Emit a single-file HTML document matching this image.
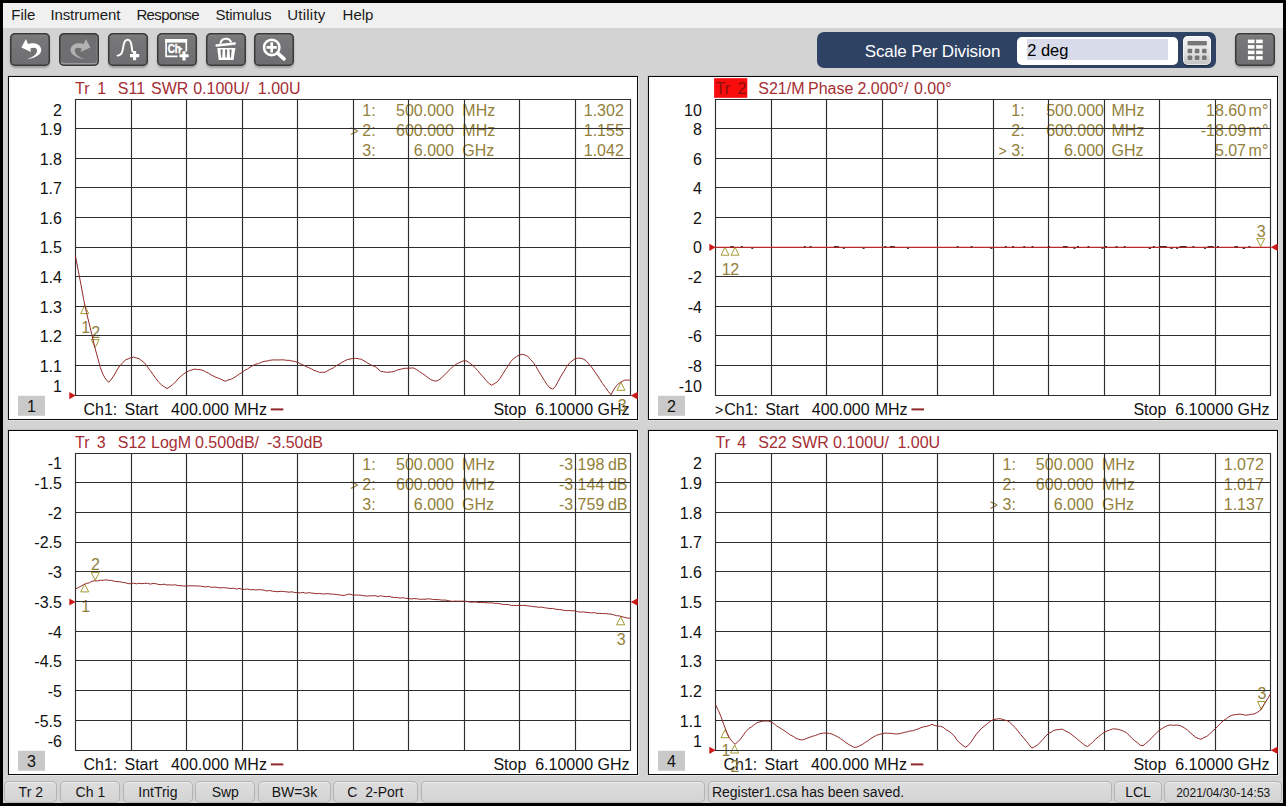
<!DOCTYPE html>
<html lang="en">
<head>
<meta charset="utf-8">
<title>Network Analyzer</title>
<style>
html,body{margin:0;padding:0;}
body{width:1286px;height:806px;background:#000;overflow:hidden;position:relative;
 font-family:"Liberation Sans", sans-serif;color:#111;}
#app{position:absolute;left:3px;top:3px;width:1280px;height:800px;background:#d3d3d3;overflow:hidden;}
#menubar{position:absolute;left:0;top:0;width:1280px;height:25px;background:#f0f0f0;}
#menubar span{position:absolute;top:2px;font-size:15px;line-height:20px;color:#1a1a1a;white-space:pre;}
.tb{position:absolute;top:30.1px;width:40px;height:32.7px;box-sizing:border-box;
 border-radius:5px;background:linear-gradient(#8a8a8b 0,#78787a 12%,#727274 60%,#6e6e70 100%);box-shadow:inset 0 0 0 1.5px #3a3a3a,0 2px 2px rgba(0,0,0,.25);}
.tb svg{position:absolute;left:0;top:0;}
.panel{position:absolute;box-sizing:border-box;background:#fff;border:1px solid #0a0a0a;box-shadow:1px 1px 0 #e6e6e6,-1px -1px 0 #c4c4c4;}
svg text{font-family:"Liberation Sans", sans-serif;}
#layer{position:absolute;left:-3px;top:-3px;}
.sb{position:absolute;top:777.8px;height:22px;box-sizing:border-box;border:1px solid #b4b4b4;border-radius:5px;
 background:linear-gradient(#dedede,#d3d3d3);box-shadow:inset 0 1px 0 #ececec;font-size:14px;line-height:20.6px;text-align:center;color:#151515;white-space:pre;}
.tb2{background:#6f6f71;box-shadow:inset 0 0 0 1.5px #3a3a3a,inset 0 -3px 0 #9c9c9c,inset -2.5px 0 0 #848484;}
#entry{position:absolute;left:814px;top:29.3px;width:399.3px;height:35.6px;border-radius:7px;background:#2e4264;}
#elabel{position:absolute;left:47.8px;top:9.9px;font-size:17px;line-height:20px;color:#fff;white-space:pre;letter-spacing:-0.14px;}
#efield{position:absolute;left:200px;top:5.2px;width:161px;height:27.2px;border-radius:5px;background:#fff;}
#esel{position:absolute;left:9.8px;top:1.8px;width:141.5px;height:21.2px;background:#d7dbea;}
#efield span{position:absolute;left:10.2px;top:2.3px;font-size:16.5px;line-height:20px;color:#000;white-space:pre;}
#calc{position:absolute;left:365.8px;top:3.9px;width:28.4px;height:28.8px;border-radius:5px;background:linear-gradient(#f4f4f6,#e2e2e4 55%,#c2c2c4);box-shadow:0 1px 1px rgba(0,0,0,.45),inset 0 0 0 1px rgba(255,255,255,.6);}
#calc svg{position:absolute;left:0;top:0;}
</style>
</head>
<body>
<div id="app">

<div id="menubar">
<span style="left:8.3px;letter-spacing:0.00px">File</span>
<span style="left:47.4px;letter-spacing:-0.10px">Instrument</span>
<span style="left:133.4px;letter-spacing:-0.62px">Response</span>
<span style="left:212.4px;letter-spacing:-0.20px">Stimulus</span>
<span style="left:284.2px;letter-spacing:0.25px">Utility</span>
<span style="left:339.6px;letter-spacing:0.00px">Help</span>
</div>
<div class="tb" style="left:7.3px"><svg width="40" height="33" viewBox="0 0 40 33"><path transform="translate(1 0)" d="M10.4 14.4L14.9 6.1L17.1 10.9C22.5 9.4 29.6 11 30.3 16.6C30.7 21.4 24.2 25.2 16 26.3C21 24.2 26.4 21.6 26 17.2C25.7 14.4 22.6 14.3 19.2 15.6L20 19z" fill="#fff"/></svg></div>
<div class="tb tb2" style="left:56.0px"><svg width="40" height="33" viewBox="0 0 40 33"><path transform="translate(1.5 0)" d="M29.9 14.4L25.4 6.1L23.2 10.9C17.8 9.4 10.7 11 10 16.6C9.6 21.4 16.1 25.2 24.3 26.3C19.3 24.2 13.9 21.6 14.3 17.2C14.6 14.4 17.7 14.3 21.1 15.6L20.3 19z" fill="#b2b2b2"/></svg></div>
<div class="tb" style="left:105.2px"><svg width="40" height="33" viewBox="0 0 40 33"><path d="M9.5 22.6c4.6 0 5.2-4.6 6-10.2 .7-3.6 1.9-5.6 4.2-5.6 2.4 0 3.4 2.6 3.9 6.2l.8 5.6" fill="none" stroke="#fff" stroke-width="1.9" stroke-linecap="round"/><path d="M26.6 18v9.2M22 22.6h9.2" stroke="#fff" stroke-width="3.1" fill="none"/></svg></div>
<div class="tb" style="left:153.9px"><svg width="40" height="33" viewBox="0 0 40 33"><path d="M29.3 18.6V6.9H9.1v16.4h11.4" fill="none" stroke="#fff" stroke-width="1.7"/><rect x="8.3" y="6.0" width="21.8" height="3.6" fill="#fff"/><text x="10.8" y="20.0" font-size="12.2" font-weight="bold" fill="#fff" textLength="13.0" lengthAdjust="spacingAndGlyphs" stroke="#fff" stroke-width=".5">Ch</text><path d="M22.6 14.0l3.4 1.9-3.4 1.9z" fill="#fff"/><path d="M27 18.2v9.2M22.4 22.8h9.2" stroke="#fff" stroke-width="3.1" fill="none"/></svg></div>
<div class="tb" style="left:202.5px"><svg width="40" height="33" viewBox="0 0 40 33"><path d="M11.3 14.9h18.1l-1.9 12h-14.8z" fill="#fff"/><path d="M14.5 16.6h2.2l-.5 8h-1.2zM19 16.6h2.2l-.4 8h-1.4zM23.5 16.6h2.2l-.7 8h-1.1z" fill="#717173"/><path d="M10.6 12.4L28.7 10.4" stroke="#fff" stroke-width="2.5" stroke-linecap="round"/><path d="M14.3 10.6c1.2-6 9.2-6.4 10.8-1.2" fill="none" stroke="#fff" stroke-width="1.9"/></svg></div>
<div class="tb" style="left:251.2px"><svg width="40" height="33" viewBox="0 0 40 33"><circle cx="17.7" cy="14.4" r="7.7" fill="none" stroke="#fff" stroke-width="2.6"/><path d="M24.2 20.6l5.8 5.2" stroke="#fff" stroke-width="3.7" stroke-linecap="round"/><path d="M17.7 9.3v10.2M12.6 14.4h10.2" stroke="#fff" stroke-width="2.6"/></svg></div>
<div id="entry"><span id="elabel">Scale Per Division</span><div id="efield"><div id="esel"></div><span>2 deg</span></div><div id="calc"><svg width="30" height="30" viewBox="0 0 30 30"><rect x="4.6" y="5.0" width="19.2" height="4.4" fill="#777"/><rect x="4.6" y="12.8" width="4.6" height="4.4" rx="1" fill="#777"/><rect x="4.6" y="19.5" width="4.6" height="4.4" rx="1" fill="#777"/><rect x="11.8" y="12.8" width="4.6" height="4.4" rx="1" fill="#777"/><rect x="11.8" y="19.5" width="4.6" height="4.4" rx="1" fill="#777"/><rect x="19.0" y="12.8" width="4.6" height="4.4" rx="1" fill="#777"/><rect x="19.0" y="19.5" width="4.6" height="4.4" rx="1" fill="#777"/></svg></div></div>
<div class="tb" id="gridbtn" style="left:1232.2px;top:30.2px;width:40.2px;height:32.4px"><svg width="40" height="33" viewBox="0 0 40 33"><rect x="12.9" y="6.6" width="6.6" height="3.6" fill="#fff"/><rect x="12.9" y="12.1" width="6.6" height="3.6" fill="#fff"/><rect x="12.9" y="17.6" width="6.6" height="3.6" fill="#fff"/><rect x="12.9" y="23.1" width="6.6" height="3.6" fill="#fff"/><rect x="21.1" y="6.6" width="6.6" height="3.6" fill="#fff"/><rect x="21.1" y="12.1" width="6.6" height="3.6" fill="#fff"/><rect x="21.1" y="17.6" width="6.6" height="3.6" fill="#fff"/><rect x="21.1" y="23.1" width="6.6" height="3.6" fill="#fff"/></svg></div>
<div class="sb" style="left:1.2px;width:53.2px;">Tr 2</div>
<div class="sb" style="left:57.4px;width:60.0px;">Ch 1</div>
<div class="sb" style="left:120.2px;width:69.5px;">IntTrig</div>
<div class="sb" style="left:192.2px;width:60.2px;">Swp</div>
<div class="sb" style="left:255.1px;width:72.6px;">BW=3k</div>
<div class="sb" style="left:329.9px;width:84.9px;">C  2-Port</div>
<div class="sb" style="left:417.9px;width:284.1px;"></div>
<div class="sb" style="left:705.3px;width:403.4px;text-align:left;padding-left:2.6px;font-size:14px">Register1.csa has been saved.</div>
<div class="sb" style="left:1111.2px;width:47.7px;">LCL</div>
<div class="sb" style="left:1161.4px;width:117.6px;font-size:12px;line-height:22.4px">2021/04/30-14:53</div>
<div class="panel" style="left:5px;top:73px;width:630px;height:344px"></div>
<div class="panel" style="left:645px;top:73px;width:630px;height:344px"></div>
<div class="panel" style="left:5px;top:427px;width:630px;height:345px"></div>
<div class="panel" style="left:645px;top:427px;width:630px;height:345px"></div>
<svg id="layer" width="1286" height="806" viewBox="0 0 1286 806">
<text x="75.0" y="93.6" font-size="16" fill="#a52d34" text-anchor="start" xml:space="preserve">Tr</text>
<text x="97.3" y="93.6" font-size="16" fill="#a52d34" text-anchor="start" xml:space="preserve">1</text>
<text x="117.8" y="93.6" font-size="16" fill="#a52d34" text-anchor="start" xml:space="preserve">S11</text>
<text x="151.0" y="93.6" font-size="16" fill="#a52d34" text-anchor="start" xml:space="preserve">SWR</text>
<text x="193.2" y="93.6" font-size="16" fill="#a52d34" text-anchor="start" xml:space="preserve">0.100U/</text>
<text x="257.8" y="93.6" font-size="16" fill="#a52d34" text-anchor="start" xml:space="preserve">1.00U</text>
<rect x="18.0" y="395.8" width="27" height="20" fill="#c9c9c9"/>
<text x="31.5" y="411.6" font-size="16" fill="#111" text-anchor="middle" xml:space="preserve">1</text>
<text x="83.5" y="415.0" font-size="16" fill="#111" text-anchor="start" xml:space="preserve">Ch1:</text>
<text x="124.5" y="415.0" font-size="16" fill="#111" text-anchor="start" xml:space="preserve">Start</text>
<text x="171.1" y="415.0" font-size="16" fill="#111" text-anchor="start" xml:space="preserve">400.000</text>
<text x="234.0" y="415.0" font-size="16" fill="#111" text-anchor="start" xml:space="preserve">MHz</text>
<rect x="270.8" y="408.4" width="12.5" height="2" fill="#922828"/>
<text x="629.5" y="415.0" font-size="16" fill="#111" text-anchor="end" xml:space="preserve">Stop  6.10000 GHz</text>
<text x="362.3" y="115.9" font-size="16" fill="#93803a" text-anchor="start" xml:space="preserve">1:</text>
<text x="453.9" y="115.9" font-size="16" fill="#93803a" text-anchor="end" xml:space="preserve">500.000</text>
<text x="462.3" y="115.9" font-size="16" fill="#93803a" text-anchor="start" xml:space="preserve">MHz</text>
<text x="623.8" y="115.9" font-size="16" fill="#93803a" text-anchor="end" xml:space="preserve">1.302</text>
<text x="350.3" y="136.1" font-size="14" fill="#93803a" text-anchor="start" xml:space="preserve">&gt;</text>
<text x="362.3" y="136.1" font-size="16" fill="#93803a" text-anchor="start" xml:space="preserve">2:</text>
<text x="453.9" y="136.1" font-size="16" fill="#93803a" text-anchor="end" xml:space="preserve">600.000</text>
<text x="462.3" y="136.1" font-size="16" fill="#93803a" text-anchor="start" xml:space="preserve">MHz</text>
<text x="623.8" y="136.1" font-size="16" fill="#93803a" text-anchor="end" xml:space="preserve">1.155</text>
<text x="362.3" y="156.0" font-size="16" fill="#93803a" text-anchor="start" xml:space="preserve">3:</text>
<text x="453.9" y="156.0" font-size="16" fill="#93803a" text-anchor="end" xml:space="preserve">6.000</text>
<text x="462.3" y="156.0" font-size="16" fill="#93803a" text-anchor="start" xml:space="preserve">GHz</text>
<text x="623.8" y="156.0" font-size="16" fill="#93803a" text-anchor="end" xml:space="preserve">1.042</text>
<path d="M84.7 305.6l-4 8h8z" fill="none" stroke="#a39a34" stroke-width="1"/>
<text x="85.6" y="333.0" font-size="16" fill="#93803a" text-anchor="middle" xml:space="preserve">1</text>
<path d="M95.2 347.6l-4 -8h8z" fill="none" stroke="#a39a34" stroke-width="1"/>
<text x="95.8" y="338.4" font-size="16" fill="#93803a" text-anchor="middle" xml:space="preserve">2</text>
<path d="M621.0 382.3l-4 8h8z" fill="none" stroke="#a39a34" stroke-width="1"/>
<text x="622.3" y="411.0" font-size="16" fill="#93803a" text-anchor="middle" xml:space="preserve">3</text>
<path d="M75.5 99.0V396.0M131.5 99.0V396.0M186.5 99.0V396.0M242.5 99.0V396.0M297.5 99.0V396.0M353.5 99.0V396.0M408.5 99.0V396.0M464.5 99.0V396.0M519.5 99.0V396.0M575.5 99.0V396.0M630.5 99.0V396.0M75.0 99.5H631.0M75.0 128.5H631.0M75.0 158.5H631.0M75.0 187.5H631.0M75.0 217.5H631.0M75.0 247.5H631.0M75.0 276.5H631.0M75.0 306.5H631.0M75.0 335.5H631.0M75.0 365.5H631.0M75.0 395.5H631.0" stroke="#2e2e2e" stroke-width="1.15" fill="none"/>
<text x="61.9" y="115.7" font-size="16" fill="#111" text-anchor="end" xml:space="preserve">2</text>
<text x="61.9" y="134.9" font-size="16" fill="#111" text-anchor="end" xml:space="preserve">1.9</text>
<text x="61.9" y="164.5" font-size="16" fill="#111" text-anchor="end" xml:space="preserve">1.8</text>
<text x="61.9" y="194.1" font-size="16" fill="#111" text-anchor="end" xml:space="preserve">1.7</text>
<text x="61.9" y="223.7" font-size="16" fill="#111" text-anchor="end" xml:space="preserve">1.6</text>
<text x="61.9" y="253.3" font-size="16" fill="#111" text-anchor="end" xml:space="preserve">1.5</text>
<text x="61.9" y="282.9" font-size="16" fill="#111" text-anchor="end" xml:space="preserve">1.4</text>
<text x="61.9" y="312.5" font-size="16" fill="#111" text-anchor="end" xml:space="preserve">1.3</text>
<text x="61.9" y="342.1" font-size="16" fill="#111" text-anchor="end" xml:space="preserve">1.2</text>
<text x="61.9" y="371.7" font-size="16" fill="#111" text-anchor="end" xml:space="preserve">1.1</text>
<text x="61.9" y="391.9" font-size="16" fill="#111" text-anchor="end" xml:space="preserve">1</text>
<polyline points="75.4,255.6 78.2,270.3 81.0,284.9 83.7,299.6 86.5,312.6 89.3,324.0 92.1,335.6 94.8,347.4 97.6,357.4 100.4,367.7 103.2,374.8 105.9,379.3 108.7,382.4 111.5,379.0 114.3,375.0 117.0,370.0 119.8,365.8 122.6,362.9 125.4,359.9 128.1,358.9 130.9,357.7 133.7,357.1 136.5,358.0 139.2,358.7 142.0,361.0 144.8,363.2 147.6,367.1 150.3,370.7 153.1,374.6 155.9,378.5 158.7,382.2 161.4,384.8 164.2,386.7 167.0,388.6 169.8,386.8 172.5,384.9 175.3,382.1 178.1,378.9 180.9,376.3 183.6,374.0 186.4,372.1 189.2,370.8 192.0,369.8 194.7,369.1 197.5,369.5 200.3,369.7 203.1,370.4 205.8,371.9 208.6,373.2 211.4,375.0 214.2,376.5 216.9,377.7 219.7,378.6 222.5,380.1 225.3,381.3 228.0,380.0 230.8,379.3 233.6,377.9 236.4,376.1 239.1,374.2 241.9,372.5 244.7,370.4 247.5,369.0 250.2,367.1 253.0,365.5 255.8,364.2 258.6,363.5 261.3,362.4 264.1,361.3 266.9,361.1 269.7,360.3 272.4,360.0 275.2,359.9 278.0,360.0 280.8,359.9 283.5,359.8 286.3,360.3 289.1,360.3 291.9,361.0 294.6,361.4 297.4,362.2 300.2,363.7 302.9,364.8 305.7,366.5 308.5,367.5 311.3,368.8 314.0,370.4 316.8,371.3 319.6,372.4 322.4,372.3 325.1,372.2 327.9,370.5 330.7,369.0 333.5,367.8 336.2,365.7 339.0,364.3 341.8,362.5 344.6,360.9 347.3,359.6 350.1,359.0 352.9,358.4 355.7,358.4 358.4,358.7 361.2,359.2 364.0,360.8 366.8,362.5 369.5,364.2 372.3,365.6 375.1,366.6 377.9,368.8 380.6,371.3 383.4,371.7 386.2,372.3 389.0,372.1 391.7,371.9 394.5,371.3 397.3,370.0 400.1,369.3 402.8,368.7 405.6,368.2 408.4,368.3 411.2,368.0 413.9,368.0 416.7,369.6 419.5,371.6 422.3,373.5 425.0,375.3 427.8,377.5 430.6,379.5 433.4,380.6 436.1,381.2 438.9,379.9 441.7,377.8 444.5,374.9 447.2,372.2 450.0,369.4 452.8,366.6 455.6,364.6 458.3,363.1 461.1,361.8 463.9,360.7 466.7,361.0 469.4,362.9 472.2,364.9 475.0,367.7 477.8,370.7 480.5,374.0 483.3,377.0 486.1,380.4 488.9,383.4 491.6,385.2 494.4,383.6 497.2,381.9 500.0,378.4 502.7,374.2 505.5,369.6 508.3,365.7 511.1,361.2 513.8,358.4 516.6,356.4 519.4,355.0 522.2,354.3 524.9,355.0 527.7,356.3 530.5,359.5 533.3,362.4 536.0,366.6 538.8,371.5 541.6,376.0 544.4,380.5 547.1,384.7 549.9,387.8 552.7,389.2 555.5,386.3 558.2,381.3 561.0,376.1 563.8,371.6 566.6,366.8 569.3,363.2 572.1,360.8 574.9,358.8 577.7,358.2 580.4,358.2 583.2,359.0 586.0,360.6 588.8,364.0 591.5,367.0 594.3,371.1 597.1,375.0 599.9,379.4 602.6,383.6 605.4,387.4 608.2,391.3 611.0,394.8 613.7,389.5 616.5,385.8 619.3,383.0 622.1,381.4 624.8,380.2 627.6,380.0 630.4,380.2 630.6,380.2" fill="none" stroke="#922828" stroke-width="1.0" stroke-linejoin="round"/>
<path d="M75.7 395.6l-6.4 -3.6v7.2z" fill="#cc1a1a"/>
<path d="M630.7 395.6l7 -3.8v7.6z" fill="#cc1a1a"/>
<rect x="714.1" y="78.2" width="33.2" height="19.6" fill="#f80c0c"/>
<text x="715.5" y="93.6" font-size="16" fill="#8a1010" text-anchor="start" xml:space="preserve">Tr</text>
<text x="737.5" y="93.6" font-size="16" fill="#8a1010" text-anchor="start" xml:space="preserve">2</text>
<text x="758.3" y="93.6" font-size="16" fill="#a52d34" text-anchor="start" xml:space="preserve">S21/M</text>
<text x="808.0" y="93.6" font-size="16" fill="#a52d34" text-anchor="start" xml:space="preserve">Phase</text>
<text x="857.5" y="93.6" font-size="16" fill="#a52d34" text-anchor="start" xml:space="preserve">2.000°/</text>
<text x="914.0" y="93.6" font-size="16" fill="#a52d34" text-anchor="start" xml:space="preserve">0.00°</text>
<rect x="658.0" y="395.8" width="27" height="20" fill="#c9c9c9"/>
<text x="671.5" y="411.6" font-size="16" fill="#111" text-anchor="middle" xml:space="preserve">2</text>
<text x="715.0" y="415.0" font-size="14" fill="#111" text-anchor="start" xml:space="preserve">&gt;</text>
<text x="724.2" y="415.0" font-size="16" fill="#111" text-anchor="start" xml:space="preserve">Ch1:</text>
<text x="765.2" y="415.0" font-size="16" fill="#111" text-anchor="start" xml:space="preserve">Start</text>
<text x="811.8" y="415.0" font-size="16" fill="#111" text-anchor="start" xml:space="preserve">400.000</text>
<text x="874.7" y="415.0" font-size="16" fill="#111" text-anchor="start" xml:space="preserve">MHz</text>
<rect x="911.5" y="408.4" width="12.5" height="2" fill="#922828"/>
<text x="1269.5" y="415.0" font-size="16" fill="#111" text-anchor="end" xml:space="preserve">Stop  6.10000 GHz</text>
<text x="1011.3" y="115.9" font-size="16" fill="#93803a" text-anchor="start" xml:space="preserve">1:</text>
<text x="1104.0" y="115.9" font-size="16" fill="#93803a" text-anchor="end" xml:space="preserve">500.000</text>
<text x="1111.5" y="115.9" font-size="16" fill="#93803a" text-anchor="start" xml:space="preserve">MHz</text>
<text x="1268.3" y="115.9" font-size="16" fill="#93803a" text-anchor="end" xml:space="preserve" style="word-spacing:-1.9px">18.60 m°</text>
<text x="1011.3" y="136.1" font-size="16" fill="#93803a" text-anchor="start" xml:space="preserve">2:</text>
<text x="1104.0" y="136.1" font-size="16" fill="#93803a" text-anchor="end" xml:space="preserve">600.000</text>
<text x="1111.5" y="136.1" font-size="16" fill="#93803a" text-anchor="start" xml:space="preserve">MHz</text>
<text x="1268.3" y="136.1" font-size="16" fill="#93803a" text-anchor="end" xml:space="preserve" style="word-spacing:-1.9px">-18.09 m°</text>
<text x="998.6" y="156.0" font-size="14" fill="#93803a" text-anchor="start" xml:space="preserve">&gt;</text>
<text x="1011.3" y="156.0" font-size="16" fill="#93803a" text-anchor="start" xml:space="preserve">3:</text>
<text x="1104.0" y="156.0" font-size="16" fill="#93803a" text-anchor="end" xml:space="preserve">6.000</text>
<text x="1111.5" y="156.0" font-size="16" fill="#93803a" text-anchor="start" xml:space="preserve">GHz</text>
<text x="1268.3" y="156.0" font-size="16" fill="#93803a" text-anchor="end" xml:space="preserve" style="word-spacing:-1.9px">5.07 m°</text>
<path d="M725.0 247.2l-4 8h8z" fill="none" stroke="#a39a34" stroke-width="1"/>
<text x="726.3" y="275.4" font-size="16" fill="#93803a" text-anchor="middle" xml:space="preserve">1</text>
<path d="M735.0 247.2l-4 8h8z" fill="none" stroke="#a39a34" stroke-width="1"/>
<text x="734.8" y="275.4" font-size="16" fill="#93803a" text-anchor="middle" xml:space="preserve">2</text>
<path d="M1260.7 246.6l-4 -8h8z" fill="none" stroke="#a39a34" stroke-width="1"/>
<text x="1261.2" y="237.4" font-size="16" fill="#93803a" text-anchor="middle" xml:space="preserve">3</text>
<path d="M715.5 99.0V396.0M771.5 99.0V396.0M826.5 99.0V396.0M882.5 99.0V396.0M937.5 99.0V396.0M993.5 99.0V396.0M1048.5 99.0V396.0M1104.5 99.0V396.0M1159.5 99.0V396.0M1215.5 99.0V396.0M1270.5 99.0V396.0M715.0 99.5H1271.0M715.0 128.5H1271.0M715.0 158.5H1271.0M715.0 187.5H1271.0M715.0 217.5H1271.0M715.0 247.5H1271.0M715.0 276.5H1271.0M715.0 306.5H1271.0M715.0 335.5H1271.0M715.0 365.5H1271.0M715.0 395.5H1271.0" stroke="#2e2e2e" stroke-width="1.15" fill="none"/>
<text x="701.9" y="115.7" font-size="16" fill="#111" text-anchor="end" xml:space="preserve">10</text>
<text x="701.9" y="134.9" font-size="16" fill="#111" text-anchor="end" xml:space="preserve">8</text>
<text x="701.9" y="164.5" font-size="16" fill="#111" text-anchor="end" xml:space="preserve">6</text>
<text x="701.9" y="194.1" font-size="16" fill="#111" text-anchor="end" xml:space="preserve">4</text>
<text x="701.9" y="223.7" font-size="16" fill="#111" text-anchor="end" xml:space="preserve">2</text>
<text x="701.9" y="253.3" font-size="16" fill="#111" text-anchor="end" xml:space="preserve">0</text>
<text x="701.9" y="282.9" font-size="16" fill="#111" text-anchor="end" xml:space="preserve">-2</text>
<text x="701.9" y="312.5" font-size="16" fill="#111" text-anchor="end" xml:space="preserve">-4</text>
<text x="701.9" y="342.1" font-size="16" fill="#111" text-anchor="end" xml:space="preserve">-6</text>
<text x="701.9" y="371.7" font-size="16" fill="#111" text-anchor="end" xml:space="preserve">-8</text>
<text x="701.9" y="391.9" font-size="16" fill="#111" text-anchor="end" xml:space="preserve">-10</text>
<path d="M715.5 247.4H1270.5" stroke="#bc282c" stroke-width="1.2" fill="none"/>
<path d="M730.3 246.6h3.5M740.8 246.6h2.0M803.8 246.6h2.0M809.6 246.6h2.0M834.0 246.6h4.8M884.3 246.6h2.0M890.0 246.6h4.8M956.6 246.6h2.0M970.6 246.6h2.0M1004.7 246.6h2.0M1012.1 246.6h2.0M1023.3 246.6h2.0M1031.5 246.6h2.0M1047.8 246.6h2.0M1063.0 246.6h4.6M1077.0 246.6h2.0M1087.5 246.6h2.0M1105.0 246.6h2.0M1115.5 246.6h2.0M1123.6 246.6h2.0M1152.8 246.6h2.0M1159.8 246.6h7.0M1179.6 246.6h7.0M1192.4 246.6h2.0M1207.6 246.6h5.8M1216.9 246.6h2.0M1234.4 246.6h3.5M1248.4 246.6h2.0M751.3 248.3h2.0M842.8 248.3h2.0M862.6 248.3h2.0M906.9 248.3h2.0M990.4 248.3h2.0M1073.5 248.3h2.0M1101.5 248.3h2.0M1148.6 248.3h2.4M1170.3 248.3h2.4M1176.1 248.3h2.0M1204.1 248.3h2.0M1242.6 248.3h2.4" stroke="#3c1010" stroke-width="1.3" fill="none" opacity=".85"/>
<path d="M715.7 247.3l-6.4 -3.6v7.2z" fill="#cc1a1a"/>
<path d="M1270.7 247.3l7 -3.8v7.6z" fill="#cc1a1a"/>
<text x="75.0" y="447.6" font-size="16" fill="#a52d34" text-anchor="start" xml:space="preserve">Tr</text>
<text x="96.8" y="447.6" font-size="16" fill="#a52d34" text-anchor="start" xml:space="preserve">3</text>
<text x="117.8" y="447.6" font-size="16" fill="#a52d34" text-anchor="start" xml:space="preserve">S12</text>
<text x="151.0" y="447.6" font-size="16" fill="#a52d34" text-anchor="start" xml:space="preserve">LogM</text>
<text x="195.0" y="447.6" font-size="16" fill="#a52d34" text-anchor="start" xml:space="preserve">0.500dB/</text>
<text x="267.0" y="447.6" font-size="16" fill="#a52d34" text-anchor="start" xml:space="preserve">-3.50dB</text>
<rect x="18.0" y="750.8" width="27" height="20" fill="#c9c9c9"/>
<text x="31.5" y="766.6" font-size="16" fill="#111" text-anchor="middle" xml:space="preserve">3</text>
<text x="83.5" y="770.0" font-size="16" fill="#111" text-anchor="start" xml:space="preserve">Ch1:</text>
<text x="124.5" y="770.0" font-size="16" fill="#111" text-anchor="start" xml:space="preserve">Start</text>
<text x="171.1" y="770.0" font-size="16" fill="#111" text-anchor="start" xml:space="preserve">400.000</text>
<text x="234.0" y="770.0" font-size="16" fill="#111" text-anchor="start" xml:space="preserve">MHz</text>
<rect x="270.8" y="763.4" width="12.5" height="2" fill="#922828"/>
<text x="629.5" y="770.0" font-size="16" fill="#111" text-anchor="end" xml:space="preserve">Stop  6.10000 GHz</text>
<text x="362.3" y="470.0" font-size="16" fill="#93803a" text-anchor="start" xml:space="preserve">1:</text>
<text x="453.9" y="470.0" font-size="16" fill="#93803a" text-anchor="end" xml:space="preserve">500.000</text>
<text x="462.0" y="470.0" font-size="16" fill="#93803a" text-anchor="start" xml:space="preserve">MHz</text>
<text x="627.5" y="470.0" font-size="16" fill="#93803a" text-anchor="end" xml:space="preserve" style="word-spacing:-0.8px">-3.198 dB</text>
<text x="350.3" y="489.9" font-size="14" fill="#93803a" text-anchor="start" xml:space="preserve">&gt;</text>
<text x="362.3" y="489.9" font-size="16" fill="#93803a" text-anchor="start" xml:space="preserve">2:</text>
<text x="453.9" y="489.9" font-size="16" fill="#93803a" text-anchor="end" xml:space="preserve">600.000</text>
<text x="462.0" y="489.9" font-size="16" fill="#93803a" text-anchor="start" xml:space="preserve">MHz</text>
<text x="627.5" y="489.9" font-size="16" fill="#93803a" text-anchor="end" xml:space="preserve" style="word-spacing:-0.8px">-3.144 dB</text>
<text x="362.3" y="510.0" font-size="16" fill="#93803a" text-anchor="start" xml:space="preserve">3:</text>
<text x="453.9" y="510.0" font-size="16" fill="#93803a" text-anchor="end" xml:space="preserve">6.000</text>
<text x="462.0" y="510.0" font-size="16" fill="#93803a" text-anchor="start" xml:space="preserve">GHz</text>
<text x="627.5" y="510.0" font-size="16" fill="#93803a" text-anchor="end" xml:space="preserve" style="word-spacing:-0.8px">-3.759 dB</text>
<path d="M84.7 583.9l-4 8h8z" fill="none" stroke="#a39a34" stroke-width="1"/>
<text x="85.6" y="611.8" font-size="16" fill="#93803a" text-anchor="middle" xml:space="preserve">1</text>
<path d="M95.2 580.4l-4 -8h8z" fill="none" stroke="#a39a34" stroke-width="1"/>
<text x="95.4" y="569.8" font-size="16" fill="#93803a" text-anchor="middle" xml:space="preserve">2</text>
<path d="M620.7 616.8l-4 8h8z" fill="none" stroke="#a39a34" stroke-width="1"/>
<text x="621.2" y="644.6" font-size="16" fill="#93803a" text-anchor="middle" xml:space="preserve">3</text>
<path d="M75.5 453.0V751.0M131.5 453.0V751.0M186.5 453.0V751.0M242.5 453.0V751.0M297.5 453.0V751.0M353.5 453.0V751.0M408.5 453.0V751.0M464.5 453.0V751.0M519.5 453.0V751.0M575.5 453.0V751.0M630.5 453.0V751.0M75.0 453.5H631.0M75.0 482.5H631.0M75.0 512.5H631.0M75.0 542.5H631.0M75.0 571.5H631.0M75.0 601.5H631.0M75.0 631.5H631.0M75.0 660.5H631.0M75.0 690.5H631.0M75.0 720.5H631.0M75.0 750.5H631.0" stroke="#2e2e2e" stroke-width="1.15" fill="none"/>
<text x="61.9" y="468.8" font-size="16" fill="#111" text-anchor="end" xml:space="preserve">-1</text>
<text x="61.9" y="489.0" font-size="16" fill="#111" text-anchor="end" xml:space="preserve">-1.5</text>
<text x="61.9" y="518.7" font-size="16" fill="#111" text-anchor="end" xml:space="preserve">-2</text>
<text x="61.9" y="548.4" font-size="16" fill="#111" text-anchor="end" xml:space="preserve">-2.5</text>
<text x="61.9" y="578.1" font-size="16" fill="#111" text-anchor="end" xml:space="preserve">-3</text>
<text x="61.9" y="607.8" font-size="16" fill="#111" text-anchor="end" xml:space="preserve">-3.5</text>
<text x="61.9" y="637.5" font-size="16" fill="#111" text-anchor="end" xml:space="preserve">-4</text>
<text x="61.9" y="667.2" font-size="16" fill="#111" text-anchor="end" xml:space="preserve">-4.5</text>
<text x="61.9" y="696.9" font-size="16" fill="#111" text-anchor="end" xml:space="preserve">-5</text>
<text x="61.9" y="726.6" font-size="16" fill="#111" text-anchor="end" xml:space="preserve">-5.5</text>
<text x="61.9" y="746.5" font-size="16" fill="#111" text-anchor="end" xml:space="preserve">-6</text>
<polyline points="75.4,589.0 78.2,587.6 81.0,586.1 83.7,584.6 86.5,583.4 89.3,582.8 92.1,581.2 94.8,580.8 97.6,580.9 100.4,580.2 103.2,580.3 105.9,579.8 108.7,580.3 111.5,580.5 114.3,581.2 117.0,581.7 119.8,581.7 122.6,582.4 125.4,582.7 128.1,583.6 130.9,583.7 133.7,583.2 136.5,583.8 139.2,583.2 142.0,583.7 144.8,583.3 147.6,583.3 150.3,584.1 153.1,583.5 155.9,583.7 158.7,584.5 161.4,584.6 164.2,584.2 167.0,585.0 169.8,584.8 172.5,585.1 175.3,584.8 178.1,585.6 180.9,585.6 183.6,586.0 186.4,586.1 189.2,585.7 192.0,585.9 194.7,585.9 197.5,586.0 200.3,586.1 203.1,586.5 205.8,586.9 208.6,586.5 211.4,587.3 214.2,587.1 216.9,587.3 219.7,587.9 222.5,587.7 225.3,587.8 228.0,588.1 230.8,588.5 233.6,588.1 236.4,589.1 239.1,588.4 241.9,589.2 244.7,589.5 247.5,588.9 250.2,589.8 253.0,589.6 255.8,590.0 258.6,589.6 261.3,589.8 264.1,590.1 266.9,591.0 269.7,590.5 272.4,591.2 275.2,591.5 278.0,591.7 280.8,591.3 283.5,591.5 286.3,591.8 289.1,592.2 291.9,591.8 294.6,592.5 297.4,592.7 300.2,592.9 302.9,592.3 305.7,593.3 308.5,592.6 311.3,593.0 314.0,593.3 316.8,593.7 319.6,593.4 322.4,594.0 325.1,593.8 327.9,593.7 330.7,594.0 333.5,594.2 336.2,594.5 339.0,594.9 341.8,595.3 344.6,595.4 347.3,594.4 350.1,594.1 352.9,595.2 355.7,595.0 358.4,595.1 361.2,595.2 364.0,595.8 366.8,596.1 369.5,595.8 372.3,595.9 375.1,595.6 377.9,596.5 380.6,595.8 383.4,596.3 386.2,596.7 389.0,596.3 391.7,597.1 394.5,597.6 397.3,597.6 400.1,598.1 402.8,597.7 405.6,598.3 408.4,598.4 411.2,599.0 413.9,598.6 416.7,598.7 419.5,599.3 422.3,599.2 425.0,599.3 427.8,598.8 430.6,599.0 433.4,599.5 436.1,599.6 438.9,599.7 441.7,600.1 444.5,600.0 447.2,600.4 450.0,601.1 452.8,601.3 455.6,601.1 458.3,601.2 461.1,601.2 463.9,601.1 466.7,601.4 469.4,602.0 472.2,602.2 475.0,601.9 477.8,602.4 480.5,602.5 483.3,602.6 486.1,602.7 488.9,602.9 491.6,602.8 494.4,603.4 497.2,603.3 500.0,603.8 502.7,604.3 505.5,604.5 508.3,604.5 511.1,605.4 513.8,605.4 516.6,605.6 519.4,605.2 522.2,605.6 524.9,605.3 527.7,605.9 530.5,606.1 533.3,606.7 536.0,606.8 538.8,607.3 541.6,607.1 544.4,607.7 547.1,608.1 549.9,608.5 552.7,608.4 555.5,609.2 558.2,609.5 561.0,609.7 563.8,610.3 566.6,610.6 569.3,610.5 572.1,610.8 574.9,610.8 577.7,611.7 580.4,612.1 583.2,611.9 586.0,612.3 588.8,612.6 591.5,612.9 594.3,612.6 597.1,613.4 599.9,613.4 602.6,613.6 605.4,613.5 608.2,613.9 611.0,614.1 613.7,614.8 616.5,615.7 619.3,615.9 622.1,616.7 624.8,617.4 627.6,618.1 630.4,618.2 630.6,618.5" fill="none" stroke="#922828" stroke-width="1.0" stroke-linejoin="round"/>
<path d="M75.7 602.0l-6.4 -3.6v7.2z" fill="#cc1a1a"/>
<path d="M630.7 602.0l7 -3.8v7.6z" fill="#cc1a1a"/>
<text x="715.5" y="447.6" font-size="16" fill="#a52d34" text-anchor="start" xml:space="preserve">Tr</text>
<text x="737.3" y="447.6" font-size="16" fill="#a52d34" text-anchor="start" xml:space="preserve">4</text>
<text x="758.3" y="447.6" font-size="16" fill="#a52d34" text-anchor="start" xml:space="preserve">S22</text>
<text x="791.5" y="447.6" font-size="16" fill="#a52d34" text-anchor="start" xml:space="preserve">SWR</text>
<text x="833.0" y="447.6" font-size="16" fill="#a52d34" text-anchor="start" xml:space="preserve">0.100U/</text>
<text x="897.4" y="447.6" font-size="16" fill="#a52d34" text-anchor="start" xml:space="preserve">1.00U</text>
<rect x="658.0" y="750.8" width="27" height="20" fill="#c9c9c9"/>
<text x="671.5" y="766.6" font-size="16" fill="#111" text-anchor="middle" xml:space="preserve">4</text>
<text x="723.5" y="770.0" font-size="16" fill="#111" text-anchor="start" xml:space="preserve">Ch1:</text>
<text x="764.5" y="770.0" font-size="16" fill="#111" text-anchor="start" xml:space="preserve">Start</text>
<text x="811.1" y="770.0" font-size="16" fill="#111" text-anchor="start" xml:space="preserve">400.000</text>
<text x="874.0" y="770.0" font-size="16" fill="#111" text-anchor="start" xml:space="preserve">MHz</text>
<rect x="910.8" y="763.4" width="12.5" height="2" fill="#922828"/>
<text x="1269.5" y="770.0" font-size="16" fill="#111" text-anchor="end" xml:space="preserve">Stop  6.10000 GHz</text>
<text x="1002.6" y="470.0" font-size="16" fill="#93803a" text-anchor="start" xml:space="preserve">1:</text>
<text x="1093.7" y="470.0" font-size="16" fill="#93803a" text-anchor="end" xml:space="preserve">500.000</text>
<text x="1102.0" y="470.0" font-size="16" fill="#93803a" text-anchor="start" xml:space="preserve">MHz</text>
<text x="1263.8" y="470.0" font-size="16" fill="#93803a" text-anchor="end" xml:space="preserve">1.072</text>
<text x="1002.6" y="489.9" font-size="16" fill="#93803a" text-anchor="start" xml:space="preserve">2:</text>
<text x="1093.7" y="489.9" font-size="16" fill="#93803a" text-anchor="end" xml:space="preserve">600.000</text>
<text x="1102.0" y="489.9" font-size="16" fill="#93803a" text-anchor="start" xml:space="preserve">MHz</text>
<text x="1263.8" y="489.9" font-size="16" fill="#93803a" text-anchor="end" xml:space="preserve">1.017</text>
<text x="989.8" y="510.0" font-size="14" fill="#93803a" text-anchor="start" xml:space="preserve">&gt;</text>
<text x="1002.6" y="510.0" font-size="16" fill="#93803a" text-anchor="start" xml:space="preserve">3:</text>
<text x="1093.7" y="510.0" font-size="16" fill="#93803a" text-anchor="end" xml:space="preserve">6.000</text>
<text x="1102.0" y="510.0" font-size="16" fill="#93803a" text-anchor="start" xml:space="preserve">GHz</text>
<text x="1263.8" y="510.0" font-size="16" fill="#93803a" text-anchor="end" xml:space="preserve">1.137</text>
<path d="M725.0 729.7l-4 8h8z" fill="none" stroke="#a39a34" stroke-width="1"/>
<text x="726.0" y="756.0" font-size="16" fill="#93803a" text-anchor="middle" xml:space="preserve">1</text>
<path d="M734.6 745.0l-4 8h8z" fill="none" stroke="#a39a34" stroke-width="1"/>
<text x="735.0" y="772.4" font-size="16" fill="#93803a" text-anchor="middle" xml:space="preserve">2</text>
<path d="M1261.5 709.5l-4 -8h8z" fill="none" stroke="#a39a34" stroke-width="1"/>
<text x="1262.0" y="698.7" font-size="16" fill="#93803a" text-anchor="middle" xml:space="preserve">3</text>
<path d="M715.5 453.0V751.0M771.5 453.0V751.0M826.5 453.0V751.0M882.5 453.0V751.0M937.5 453.0V751.0M993.5 453.0V751.0M1048.5 453.0V751.0M1104.5 453.0V751.0M1159.5 453.0V751.0M1215.5 453.0V751.0M1270.5 453.0V751.0M715.0 453.5H1271.0M715.0 482.5H1271.0M715.0 512.5H1271.0M715.0 542.5H1271.0M715.0 571.5H1271.0M715.0 601.5H1271.0M715.0 631.5H1271.0M715.0 660.5H1271.0M715.0 690.5H1271.0M715.0 720.5H1271.0M715.0 750.5H1271.0" stroke="#2e2e2e" stroke-width="1.15" fill="none"/>
<text x="701.9" y="468.8" font-size="16" fill="#111" text-anchor="end" xml:space="preserve">2</text>
<text x="701.9" y="489.0" font-size="16" fill="#111" text-anchor="end" xml:space="preserve">1.9</text>
<text x="701.9" y="518.7" font-size="16" fill="#111" text-anchor="end" xml:space="preserve">1.8</text>
<text x="701.9" y="548.4" font-size="16" fill="#111" text-anchor="end" xml:space="preserve">1.7</text>
<text x="701.9" y="578.1" font-size="16" fill="#111" text-anchor="end" xml:space="preserve">1.6</text>
<text x="701.9" y="607.8" font-size="16" fill="#111" text-anchor="end" xml:space="preserve">1.5</text>
<text x="701.9" y="637.5" font-size="16" fill="#111" text-anchor="end" xml:space="preserve">1.4</text>
<text x="701.9" y="667.2" font-size="16" fill="#111" text-anchor="end" xml:space="preserve">1.3</text>
<text x="701.9" y="696.9" font-size="16" fill="#111" text-anchor="end" xml:space="preserve">1.2</text>
<text x="701.9" y="726.6" font-size="16" fill="#111" text-anchor="end" xml:space="preserve">1.1</text>
<text x="701.9" y="746.5" font-size="16" fill="#111" text-anchor="end" xml:space="preserve">1</text>
<polyline points="715.6,704.8 718.4,710.6 721.1,716.9 723.9,724.9 726.7,732.1 729.5,738.1 732.2,741.5 735.0,744.3 737.8,741.9 740.6,739.0 743.3,735.1 746.1,731.4 748.9,728.4 751.7,726.8 754.4,724.5 757.2,722.7 760.0,721.8 762.8,721.1 765.5,721.0 768.3,721.0 771.1,722.1 773.9,723.5 776.6,725.9 779.4,727.5 782.2,729.3 785.0,731.1 787.7,733.1 790.5,735.1 793.3,736.4 796.1,738.3 798.8,739.3 801.6,740.0 804.4,739.4 807.2,738.2 809.9,737.2 812.7,736.2 815.5,735.5 818.3,734.2 821.0,733.5 823.8,733.0 826.6,733.1 829.4,733.4 832.1,734.1 834.9,735.5 837.7,736.8 840.5,738.6 843.2,740.5 846.0,742.7 848.8,744.5 851.6,746.0 854.3,747.5 857.1,747.0 859.9,745.6 862.7,744.3 865.4,742.3 868.2,740.6 871.0,738.4 873.8,736.8 876.5,735.3 879.3,734.4 882.1,733.8 884.9,733.1 887.6,733.3 890.4,733.3 893.2,733.7 896.0,734.0 898.7,733.8 901.5,733.2 904.3,732.4 907.1,731.9 909.8,731.0 912.6,730.8 915.4,729.8 918.2,728.9 920.9,727.7 923.7,726.8 926.5,726.3 929.3,725.6 932.0,724.3 934.8,725.5 937.6,726.1 940.4,726.3 943.1,727.2 945.9,729.6 948.7,731.2 951.5,733.3 954.2,735.8 957.0,740.3 959.8,743.0 962.6,745.2 965.3,747.3 968.1,745.6 970.9,742.3 973.7,738.2 976.4,734.0 979.2,731.0 982.0,727.9 984.8,725.8 987.5,723.5 990.3,721.3 993.1,719.7 995.9,719.2 998.6,718.7 1001.4,718.9 1004.2,719.9 1007.0,720.6 1009.7,722.3 1012.5,725.0 1015.3,727.7 1018.1,731.1 1020.8,734.7 1023.6,737.9 1026.4,741.3 1029.2,744.8 1031.9,748.1 1034.7,746.7 1037.5,745.0 1040.3,742.2 1043.0,739.3 1045.8,736.0 1048.6,733.5 1051.4,732.0 1054.1,730.3 1056.9,729.8 1059.7,729.4 1062.5,729.2 1065.2,730.8 1068.0,732.2 1070.8,733.9 1073.6,736.1 1076.3,738.3 1079.1,740.7 1081.9,742.9 1084.7,745.3 1087.4,746.6 1090.2,744.5 1093.0,741.7 1095.8,739.0 1098.5,736.7 1101.3,734.5 1104.1,732.4 1106.9,731.0 1109.7,730.1 1112.4,728.9 1115.2,728.9 1118.0,729.3 1120.8,730.1 1123.5,731.3 1126.3,732.6 1129.1,735.2 1131.9,738.3 1134.6,740.7 1137.4,742.6 1140.2,745.2 1143.0,745.8 1145.7,743.3 1148.5,741.3 1151.3,738.1 1154.1,735.4 1156.8,732.7 1159.6,729.9 1162.4,728.4 1165.2,726.7 1167.9,725.4 1170.7,724.9 1173.5,725.3 1176.3,725.1 1179.0,725.3 1181.8,726.4 1184.6,728.0 1187.4,730.0 1190.1,732.6 1192.9,735.0 1195.7,737.3 1198.5,738.6 1201.2,739.2 1204.0,737.5 1206.8,736.4 1209.6,734.1 1212.3,731.4 1215.1,728.9 1217.9,726.1 1220.7,723.2 1223.4,720.6 1226.2,718.9 1229.0,716.7 1231.8,715.2 1234.5,714.8 1237.3,714.4 1240.1,714.1 1242.9,714.6 1245.6,715.2 1248.4,714.9 1251.2,714.3 1254.0,714.0 1256.7,712.7 1259.5,711.0 1262.3,707.2 1265.1,702.8 1267.8,698.4 1270.5,694.0" fill="none" stroke="#922828" stroke-width="1.0" stroke-linejoin="round"/>
<path d="M715.7 750.3l-6.4 -3.6v7.2z" fill="#cc1a1a"/>
<path d="M1270.7 750.3l7 -3.8v7.6z" fill="#cc1a1a"/>
</svg>
</div>
</body>
</html>
